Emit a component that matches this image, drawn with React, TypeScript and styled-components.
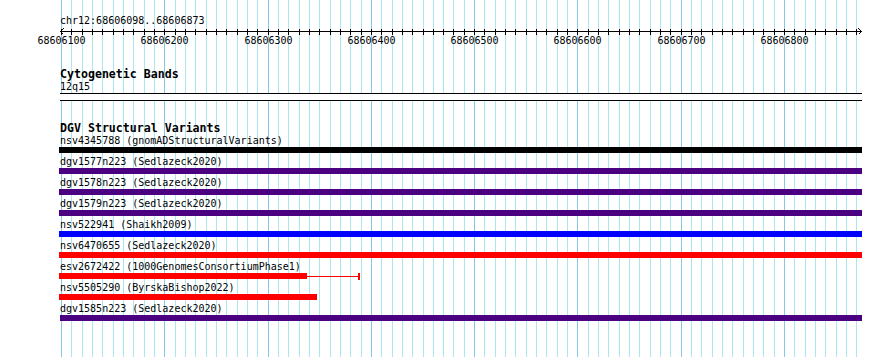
import React from 'react';
import styled, { createGlobalStyle } from 'styled-components';

const BASE0 = 68606100;
const X0 = 61;
const PPB = 1.03286;
const LEFT = 60;
const WIDTH = 802;
const xOf = (pos: number) => X0 + (pos - BASE0) * PPB;

const GlobalStyle = createGlobalStyle`
  html, body { margin: 0; padding: 0; background: #ffffff; }
`;

const Page = styled.div`
  position: relative;
  width: 890px;
  height: 357px;
  overflow: hidden;
  background: #ffffff;
  color: #000000;
  font-family: "DejaVu Sans Mono", "Liberation Mono", monospace;
`;

const Guides = styled.svg`
  position: absolute;
  top: 0;
  left: 0;
  z-index: 0;
`;

const Content = styled.div`
  position: relative;
  z-index: 1;
  display: flex;
  flex-direction: column;
  width: ${WIDTH}px;
  padding: 14px 0 0 ${LEFT}px;
`;

const PositionLabel = styled.div`
  font-size: 10px;
  line-height: 14px;
  height: 14px;
  white-space: nowrap;
`;

const Ruler = styled.svg`
  display: block;
  overflow: visible;
`;

const TrackTitle = styled.div<{ $gap: number }>`
  margin-top: ${(p) => p.$gap}px;
  font-weight: bold;
  font-size: 11.6px;
  line-height: 14px;
  height: 14px;
  white-space: nowrap;
`;

const ItemLabel = styled.div`
  font-size: 10px;
  line-height: 12px;
  height: 12px;
  white-space: nowrap;
`;

const BandBox = styled.div`
  height: 6px;
  border-top: 1px solid #000;
  border-bottom: 1px solid #000;
  background: #ffffff;
`;

const FeatureList = styled.div`
  display: flex;
  flex-direction: column;
`;

const FeatureRow = styled.div`
  display: flex;
  flex-direction: column;
  padding-bottom: 3px;
`;

const BarLane = styled.div`
  display: flex;
  align-items: center;
  height: 6px;
`;

const ThickBar = styled.div<{ $color: string }>`
  height: 6px;
  flex: none;
  background: ${(p) => p.$color};
`;

const ThinLine = styled.div<{ $color: string }>`
  height: 1px;
  flex: none;
  background: ${(p) => p.$color};
`;

const EndTick = styled.div<{ $color: string }>`
  width: 2px;
  height: 7px;
  flex: none;
  background: ${(p) => p.$color};
`;

type Feature = {
  name: string;
  color: string;
  start: number; // px offset from left edge of data area
  thickEnd: number;
  end: number;
};

const INDIGO = '#4b0082';
const RED = '#ff0000';

const features: Feature[] = [
  { name: 'nsv4345788 (gnomADStructuralVariants)', color: '#000000', start: -1, thickEnd: 802, end: 802 },
  { name: 'dgv1577n223 (Sedlazeck2020)', color: INDIGO, start: -1, thickEnd: 802, end: 802 },
  { name: 'dgv1578n223 (Sedlazeck2020)', color: INDIGO, start: -1, thickEnd: 802, end: 802 },
  { name: 'dgv1579n223 (Sedlazeck2020)', color: INDIGO, start: -1, thickEnd: 802, end: 802 },
  { name: 'nsv522941 (Shaikh2009)', color: '#0000ff', start: -1, thickEnd: 802, end: 802 },
  { name: 'nsv6470655 (Sedlazeck2020)', color: RED, start: -1, thickEnd: 802, end: 802 },
  { name: 'esv2672422 (1000GenomesConsortiumPhase1)', color: RED, start: -1, thickEnd: 247, end: 300 },
  { name: 'nsv5505290 (ByrskaBishop2022)', color: RED, start: -1, thickEnd: 257, end: 257 },
  { name: 'dgv1585n223 (Sedlazeck2020)', color: INDIGO, start: 0, thickEnd: 802, end: 802 },
];

const minorPositions: number[] = [];
for (let p = BASE0; p <= 68606873; p += 10) minorPositions.push(p);

const GuideLines: React.FC = () => (
  <Guides width={890} height={357} shapeRendering="crispEdges">
    {minorPositions.map((p) => {
      const major = (p - BASE0) % 100 === 0;
      const x = Math.round(xOf(p)) + 0.5;
      return (
        <line
          key={p}
          x1={x}
          x2={x}
          y1={0}
          y2={357}
          stroke={major ? '#86c8ea' : '#ace6ef'}
          strokeWidth={1}
        />
      );
    })}
  </Guides>
);

const Axis: React.FC = () => (
  <Ruler width={WIDTH} height={20} shapeRendering="crispEdges">
    <line x1={0} x2={WIDTH} y1={3.5} y2={3.5} stroke="#000" strokeWidth={1} />
    <polyline points="3.5,0.5 0.5,3.5 3.5,6.5" fill="none" stroke="#000" strokeWidth={1} />
    <polyline points="798.5,0.5 801.5,3.5 798.5,6.5" fill="none" stroke="#000" strokeWidth={1} />
    {minorPositions.map((p) => {
      const x = Math.round(xOf(p)) - LEFT + 0.5;
      return <line key={p} x1={x} x2={x} y1={1} y2={6.5} stroke="#000" strokeWidth={1} />;
    })}
    {minorPositions
      .filter((p) => (p - BASE0) % 100 === 0)
      .map((p) => (
        <text
          key={p}
          x={Math.round(xOf(p)) - LEFT + 0.5}
          y={16}
          textAnchor="middle"
          fontSize={10}
          fontFamily='"DejaVu Sans Mono", "Liberation Mono", monospace'
          fill="#000"
          shapeRendering="auto"
        >
          {p}
        </text>
      ))}
  </Ruler>
);

const FeatureItem: React.FC<{ f: Feature }> = ({ f }) => (
  <FeatureRow>
    <ItemLabel>{f.name}</ItemLabel>
    <BarLane style={{ marginLeft: f.start }}>
      <ThickBar $color={f.color} style={{ width: f.thickEnd - f.start }} />
      {f.end > f.thickEnd && (
        <>
          <ThinLine $color={f.color} style={{ width: f.end - f.thickEnd - 2 }} />
          <EndTick $color={f.color} />
        </>
      )}
    </BarLane>
  </FeatureRow>
);

export default function App() {
  return (
    <Page>
      <GlobalStyle />
      <GuideLines />
      <Content>
        <PositionLabel>chr12:68606098..68606873</PositionLabel>
        <Axis />
        <TrackTitle $gap={19}>Cytogenetic Bands</TrackTitle>
        <ItemLabel>12q15</ItemLabel>
        <BandBox />
        <TrackTitle $gap={20}>DGV Structural Variants</TrackTitle>
        <FeatureList>
          {features.map((f) => (
            <FeatureItem key={f.name} f={f} />
          ))}
        </FeatureList>
      </Content>
    </Page>
  );
}
